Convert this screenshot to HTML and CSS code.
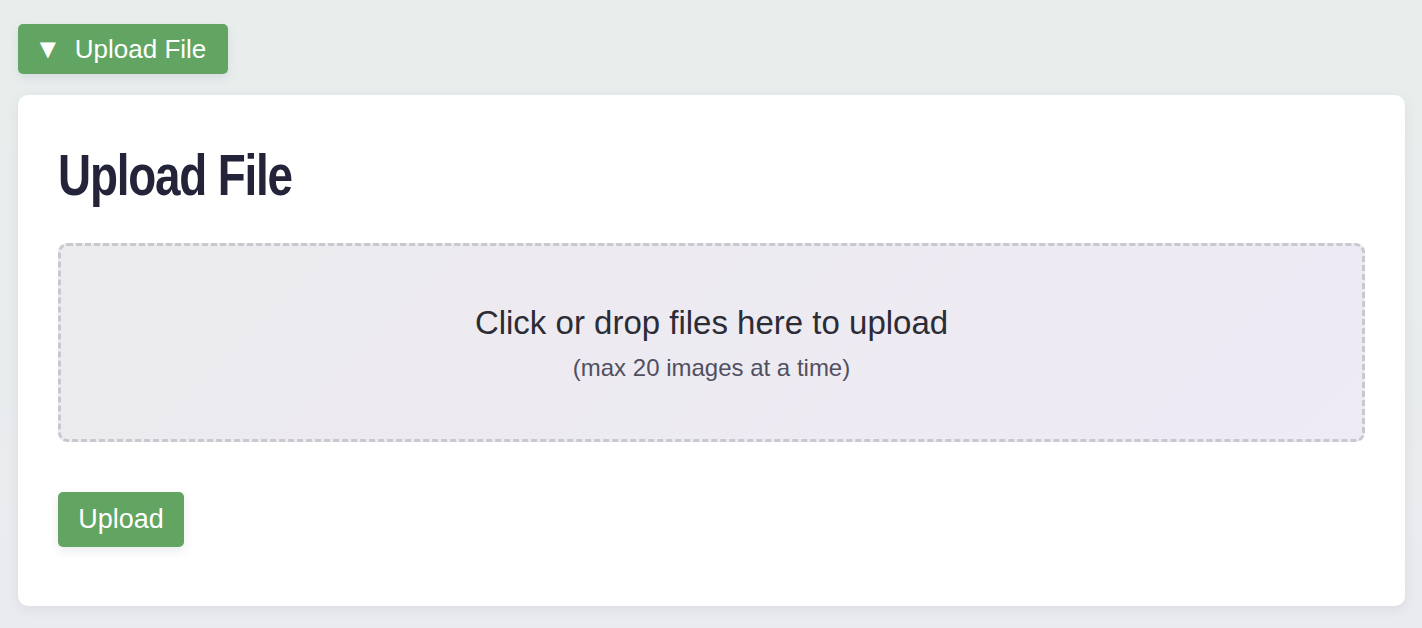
FILE: index.html
```html
<!DOCTYPE html>
<html lang="en">
  <head>
    <meta charset="utf-8" />
    <meta name="viewport" content="width=device-width, initial-scale=1" />
    <title>Upload File</title>
    <link rel="stylesheet" href="styles.css">
  </head>
  <body>
    <div class="page">
      <button class="toggle" type="button"><span class="arrow">&#9660;</span> Upload File</button>

      <div class="card">
        <h1>Upload File</h1>
        <!-- drop zone, the input itself is hidden -->
        <label class="dropzone">
          <input type="file" multiple />
          <span class="drop-main">Click or drop files here to upload</span>
          <span class="drop-sub">(max 20 images at a time)</span>
        </label>
        <button class="btn" type="submit">Upload</button>
      </div>
    </div>
  </body>
</html>
```

FILE: styles.css
```css
html, body {
  margin: 0;
  height: 100%;
}

body {
  background: linear-gradient(180deg, #e8eeec 0%, #eaebef 100%);
  font-family: "Liberation Sans", Arial, sans-serif;
}

.page {
  padding: 24px 17px 0 18px;
  display: flex;
  flex-direction: column;
  align-items: flex-start;
  gap: 21px;
}

.toggle {
  height: 50px;
  width: 210px;
  padding: 0;
  border: none;
  border-radius: 5px;
  background-color: #62a562;
  color: #fff;
  font-family: "Liberation Sans", Arial, sans-serif;
  font-size: 26px;
  box-shadow: 0 4px 10px rgba(80, 90, 140, 0.12);
  cursor: pointer;
  display: flex;
  align-items: center;
  justify-content: center;
}

.toggle .arrow {
  font-family: "DejaVu Sans", sans-serif;
  font-size: 21px;
  margin-right: 19px;
}

.card {
  align-self: stretch;
  background-color: #fff;
  border-radius: 10px;
  box-shadow: 0 3px 12px rgba(90, 90, 130, 0.10);
  padding: 40px 40px 59px 40px;
  display: flex;
  flex-direction: column;
  align-items: flex-start;
}

.card h1 {
  margin: 10px 0 38px 0;
  font-family: "Liberation Sans", sans-serif;
  font-weight: 700;
  font-size: 58px;
  line-height: 60px;
  letter-spacing: -1.5px;
  color: #23233a;
  transform: scaleX(0.79);
  transform-origin: left center;
}

.dropzone {
  align-self: stretch;
  height: 193px;
  border: 3px dashed #c9c8ce;
  border-radius: 9px;
  background: linear-gradient(135deg, #ecebed 0%, #eeeaf6 100%);
  display: flex;
  flex-direction: column;
  align-items: center;
  justify-content: center;
  gap: 12px;
  cursor: pointer;
}

.dropzone input {
  display: none;
}

.drop-main {
  font-size: 33px;
  color: #2c2c36;
}

.drop-sub {
  font-size: 24px;
  color: #505060;
}

.btn {
  margin-top: 50px;
  height: 55px;
  width: 126px;
  border: none;
  border-radius: 5px;
  background-color: #62a562;
  color: #fff;
  font-family: "Liberation Sans", Arial, sans-serif;
  font-size: 27px;
  box-shadow: 0 4px 10px rgba(80, 90, 140, 0.12);
  cursor: pointer;
}
```
